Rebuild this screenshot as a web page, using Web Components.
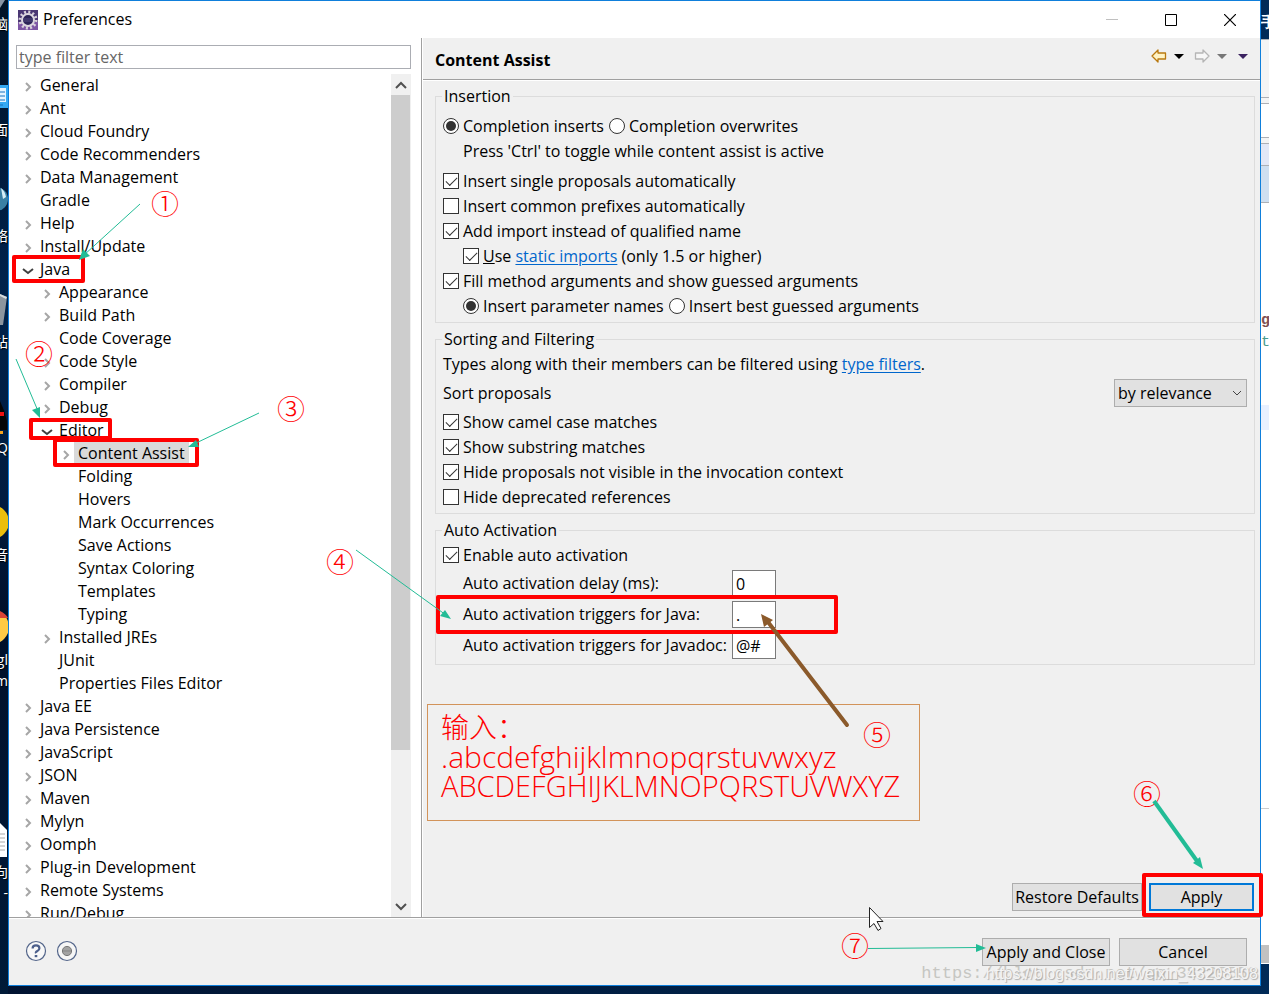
<!DOCTYPE html>
<html lang="en">
<head>
<meta charset="utf-8">
<title>Preferences</title>
<style>
  html, body { height: 100%; margin: 0; }
  body {
    --face: #f0f0f0; --line: #a0a0a0; --frame: #dcdcdc; --accent: #0078d7; --mark: #f00; --guide: #22bc96;
    font: 16px/23px "Open Sans", "Noto Sans CJK SC", sans-serif; color: #000; background: #021a3a; overflow: hidden;
  }
</style>
</head>
<body>
<desktop-scene>
  <desktop-edge slot="left"></desktop-edge>
  <pref-dialog heading="Preferences">
    <pref-tree slot="nav">
      <tree-row state="closed">General</tree-row>
      <tree-row state="closed">Ant</tree-row>
      <tree-row state="closed">Cloud Foundry</tree-row>
      <tree-row state="closed">Code Recommenders</tree-row>
      <tree-row state="closed">Data Management</tree-row>
      <tree-row>Gradle</tree-row>
      <tree-row state="closed">Help</tree-row>
      <tree-row state="closed">Install/Update</tree-row>
      <tree-row state="open">Java</tree-row>
      <tree-row level="2" state="closed">Appearance</tree-row>
      <tree-row level="2" state="closed">Build Path</tree-row>
      <tree-row level="2">Code Coverage</tree-row>
      <tree-row level="2" state="closed">Code Style</tree-row>
      <tree-row level="2" state="closed">Compiler</tree-row>
      <tree-row level="2" state="closed">Debug</tree-row>
      <tree-row level="2" state="open">Editor</tree-row>
      <tree-row level="3" state="closed" selected>Content Assist</tree-row>
      <tree-row level="3">Folding</tree-row>
      <tree-row level="3">Hovers</tree-row>
      <tree-row level="3">Mark Occurrences</tree-row>
      <tree-row level="3">Save Actions</tree-row>
      <tree-row level="3">Syntax Coloring</tree-row>
      <tree-row level="3">Templates</tree-row>
      <tree-row level="3">Typing</tree-row>
      <tree-row level="2" state="closed">Installed JREs</tree-row>
      <tree-row level="2">JUnit</tree-row>
      <tree-row level="2">Properties Files Editor</tree-row>
      <tree-row state="closed">Java EE</tree-row>
      <tree-row state="closed">Java Persistence</tree-row>
      <tree-row state="closed">JavaScript</tree-row>
      <tree-row state="closed">JSON</tree-row>
      <tree-row state="closed">Maven</tree-row>
      <tree-row state="closed">Mylyn</tree-row>
      <tree-row state="closed">Oomph</tree-row>
      <tree-row state="closed">Plug-in Development</tree-row>
      <tree-row state="closed">Remote Systems</tree-row>
      <tree-row state="closed">Run/Debug</tree-row>
    </pref-tree>
    <pref-page heading="Content Assist">
      <option-group legend="Insertion" roomy>
        <option-row>
          <choice-box kind="radio" checked>Completion inserts</choice-box>
          <choice-box kind="radio">Completion overwrites</choice-box>
        </option-row>
        <option-row indent last>Press 'Ctrl' to toggle while content assist is active</option-row>
        <option-row><choice-box checked>Insert single proposals automatically</choice-box></option-row>
        <option-row><choice-box>Insert common prefixes automatically</choice-box></option-row>
        <option-row><choice-box checked>Add import instead of qualified name</choice-box></option-row>
        <option-row indent><choice-box checked><u>U</u>se <text-link>static imports</text-link> (only 1.5 or higher)</choice-box></option-row>
        <option-row><choice-box checked>Fill method arguments and show guessed arguments</choice-box></option-row>
        <option-row indent>
          <choice-box kind="radio" checked>Insert parameter names</choice-box>
          <choice-box kind="radio">Insert best guessed arguments</choice-box>
        </option-row>
      </option-group>
      <option-group legend="Sorting and Filtering">
        <option-row><span>Types along with their members can be filtered using <text-link>type filters</text-link>.</span></option-row>
        <drop-field label="Sort proposals" value="by relevance"></drop-field>
        <option-row><choice-box checked>Show camel case matches</choice-box></option-row>
        <option-row><choice-box checked>Show substring matches</choice-box></option-row>
        <option-row><choice-box checked>Hide proposals not visible in the invocation context</choice-box></option-row>
        <option-row><choice-box>Hide deprecated references</choice-box></option-row>
      </option-group>
      <option-group legend="Auto Activation">
        <option-row><choice-box checked>Enable auto activation</choice-box></option-row>
        <trigger-fields></trigger-fields>
      </option-group>
      <push-button slot="actions" style="--w:130px">Restore Defaults</push-button>
      <push-button slot="actions" style="--w:105px" primary>Apply</push-button>
    </pref-page>
    <push-button slot="buttons" style="--w:128px">Apply and Close</push-button>
    <push-button slot="buttons" style="--w:128px">Cancel</push-button>
  </pref-dialog>
  <editor-edge slot="right"></editor-edge>
  <tutorial-notes slot="over"></tutorial-notes>
</desktop-scene>

<script>
const define = (name, html, setup) => customElements.define(name, class extends HTMLElement {
  constructor() {
    super();
    const t = document.createElement('template');
    t.innerHTML = typeof html === 'function' ? html(this) : html;
    this.attachShadow({ mode: 'open' }).append(t.content.cloneNode(true));
    if (setup) setup(this, this.shadowRoot);
  }
});

define('desktop-scene', `
<style>
  :host { display: grid; position: relative; grid-template-columns: 8px minmax(0, 1fr) 8px; height: 100vh; overflow: hidden;
    background: linear-gradient(90deg, #011331, #002147 60%, #002a57); }
  .mid { display: flex; min-width: 0; min-height: 0; padding-bottom: 8px; }
</style>
<slot name="left"></slot><div class="mid"><slot></slot></div><slot name="right"></slot><slot name="over"></slot>`);

/* Sliver of the desktop with its shortcut icons, to the left of the dialog */
define('desktop-edge', `
<style>
  :host { display: block; position: relative; overflow: hidden; color: #fff; background: linear-gradient(#021327, #00224b 28%, #001c40 50%, #00102b 62%, #001a38); }
  span { position: absolute; right: 0; font-size: 14px; line-height: 20px; white-space: nowrap; text-shadow: 1px 1px 1px #000; }
  svg { position: absolute; left: 0; top: 0; }
</style>
<svg width="8" height="994" aria-hidden="true">
  <path d="M0 0h5L0 8z" fill="#8895a5"/>
  <path d="M0 85h8v23H0z" fill="#35a9f3"/><path d="M0 88h6v14H0z" fill="#e5f4ff"/><path d="M0 92h5M0 96h5M0 100h5M0 105h3" stroke="#1673bf"/>
  <circle cx="-4" cy="199" r="12" fill="#3980a4"/><path d="M1 188q4 3 5 9l-3 2z" fill="#d6eef6"/>
  <path d="M0 294l7 3-4 28H0z" fill="#8c959e"/><path d="M0 294l7 3-1 2-6-3z" fill="#d8dde0"/>
  <path d="M0 401q5 10 7 20v9H0z" fill="#060606"/><path d="M0 412h4v4H0z" fill="#e11"/><path d="M0 431h3v3H0z" fill="#f6a31c"/>
  <circle cx="-8" cy="522" r="17" fill="#eabf0c"/>
  <circle cx="-8" cy="627" r="17" fill="#ffca45"/><path d="M0 611q6 3 8 7H0z" fill="#db4437"/>
  <path d="M0 823l7 7v27H0z" fill="#fff"/><path d="M0 834h5M0 838h5M0 842h5M0 846h5M0 850h5" stroke="#aaa"/>
</svg>
<span style="top:14px">脑</span><span style="top:120px">面</span><span style="top:226px">络</span><span style="top:332px">站</span>
<span style="top:438px">Q</span><span style="top:545px">音</span><span style="top:650px">gl</span><span style="top:671px">m</span><span style="top:862px">向</span><span style="top:883px">-</span>`);

/* Sliver of the editor window behind the dialog */
define('editor-edge', `
<style>
  :host { display: block; position: relative; overflow: hidden; }
  svg { position: absolute; left: 0; top: 0; }
  span { position: absolute; left: 0; font: bold 15px/20px "Liberation Mono", monospace; }
</style>
<svg width="8" height="994" aria-hidden="true" shape-rendering="crispEdges">
  <path fill="#fff" d="M0 39h8v925H0z"/><path fill="#f4f4f4" d="M0 39h8v64H0zM0 138h8v6H0z"/>
  <path fill="#e3e8f6" d="M0 144h8v21H0z"/><path fill="#cfdff0" d="M0 166h8v36H0z"/>
  <path fill="#e8f0ff" d="M0 405h8v25H0z"/><path fill="#c1c1c1" d="M0 945h8v18H0z"/>
  <path stroke="#adb0b5" d="M0 39.5h8M0 97.5h8M0 103.5h8M0 137.5h8M0 143.5h8M0 165.5h8M0 202.5h8"/><path stroke="#ccc" d="M0 808.5h8"/>
</svg>
<span style="top:14px;color:#fff">手</span><span style="top:311px;color:#805050">g</span><span style="top:333px;color:#4a9a8c;font-weight:400">t</span>`);

define('pref-dialog', h => `
<style>
  :host { display: flex; flex: 1; min-width: 0; flex-direction: column; border: 1px solid #0f7fdb; background: var(--face); }
  header { display: flex; align-items: center; height: 37px; padding: 0 1px 0 9px; background: #fff; }
  h1 { flex: 1; margin: 0 0 0 5px; font: inherit; }
  header button { display: grid; place-items: center; width: 59px; height: 37px; padding: 0; border: 0; background: none; }
  main { display: grid; grid-template-columns: 413px minmax(0, 1fr); flex: 1; min-height: 0; }
  footer { display: flex; align-items: center; gap: 9px; height: 66px; padding: 1px 13px 0 16px; border-top: 1px solid var(--line); box-shadow: inset 0 1px #fff; }
  footer .round { width: 22px; height: 22px; margin-bottom: 2px; padding: 0; border: 0; background: none; }
  .space { flex: 1; }
  svg { display: block; }
</style>
<header>
  <svg width="20" height="20" viewBox="0 0 20 20" aria-hidden="true">
    <rect width="20" height="20" fill="#4a3773"/><path d="M0 12h20v8H0z" fill="#7d55a4"/>
    <circle cx="10" cy="10" r="8" fill="none" stroke="#d9d2dc" stroke-width="3" stroke-dasharray="2 2.19"/>
    <circle cx="10" cy="10" r="6" fill="#2c2357" stroke="#dcd6df" stroke-width="2"/><path d="M5 9h10M5 11h10" stroke="#554c83"/>
  </svg>
  <h1>${h.getAttribute('heading')}</h1>
  <button aria-label="Minimize"><svg width="12" height="12"><path d="M0 5.5h12" stroke="#c0c0c0"/></svg></button>
  <button aria-label="Maximize"><svg width="12" height="12"><path d="M.5.5h11v11H.5z" fill="none" stroke="#000"/></svg></button>
  <button aria-label="Close"><svg width="12" height="12"><path d="M0 0l12 12M12 0L0 12" stroke="#000" stroke-width="1.2"/></svg></button>
</header>
<main><slot name="nav"></slot><slot></slot></main>
<footer>
  <button class="round" aria-label="Help"><svg width="22" height="22" viewBox="0 0 22 22"><circle cx="11" cy="11" r="9.5" fill="#f8f8f8" stroke="#53658a" stroke-width="1.2"/><path d="M7.6 8.4Q7.6 5.4 11 5.4T14.4 8.3Q14.4 10 12.4 11T11 13.3" fill="none" stroke="#4c5f8b" stroke-width="2.2"/><path d="M9.7 15h2.6v2.2H9.7z" fill="#4c5f8b"/></svg></button>
  <button class="round" aria-label="Record preferences"><svg width="22" height="22" viewBox="0 0 22 22"><circle cx="11" cy="11" r="9.5" fill="#f6f6f6" stroke="#53658a" stroke-width="1.2"/><circle cx="11" cy="11" r="4.6" fill="#a2a2a2" stroke="#777"/><path d="M7 11h8" stroke="#858585"/></svg></button>
  <span class="space"></span>
  <slot name="buttons"></slot>
</footer>`);

define('pref-tree', `
<style>
  :host { display: flex; flex-direction: column; min-height: 0; padding: 7px 10px 0 7px; background: #fff; border-right: 1px solid var(--line); }
  input { height: 24px; box-sizing: border-box; padding: 0 2px; border: 1px solid #abadb3; border-radius: 0; font: inherit; outline: 0; }
  input::placeholder { color: #666; opacity: 1; }
  .body { display: flex; flex: 1; min-height: 0; margin-top: 5px; }
  .list { flex: 1; overflow: hidden; }
  .bar { display: flex; flex-direction: column; width: 20px; background: #f0f0f0; }
  .bar button { display: grid; place-items: center; height: 21px; padding: 0; border: 0; background: none; }
  .track { flex: 1; } .thumb { width: 19px; height: calc(100% - 146px); background: #cdcdcd; }
  path { fill: none; stroke: #505050; stroke-width: 2; }
</style>
<input type="text" placeholder="type filter text" aria-label="Filter preferences">
<div class="body">
  <div class="list" role="tree"><slot></slot></div>
  <div class="bar">
    <button aria-label="Scroll up"><svg width="12" height="8"><path d="M1 7l5-5 5 5"/></svg></button>
    <div class="track"><div class="thumb"></div></div>
    <button aria-label="Scroll down"><svg width="12" height="8"><path d="M1 1l5 5 5-5"/></svg></button>
  </div>
</div>`);

define('tree-row', h => {
  const s = h.getAttribute('state');
  return `
<style>
  :host { display: flex; align-items: center; height: 23px; padding-left: calc(6px + 19px * (var(--level) - 1)); white-space: nowrap; }
  svg { width: 12px; height: 12px; margin-right: 2px; margin-top: 2px; }
  path { fill: none; stroke: #a6a6a6; stroke-width: 2; } .open { stroke: #404040; }
  span { padding: 0 4px; } :host([selected]) span { background: #d9d9d9; }
</style>
<svg aria-hidden="true">${s === 'closed' ? '<path d="M4 2l4 4-4 4"/>' : s === 'open' ? '<path class="open" d="M1 4l5 4 5-4"/>' : ''}</svg><span><slot></slot></span>`;
}, h => {
  h.style.setProperty('--level', h.getAttribute('level') || 1);
  h.setAttribute('role', 'treeitem');
});

define('pref-page', h => `
<style>
  :host { display: flex; flex-direction: column; min-width: 0; border-left: 1px solid #fff; }
  header { display: flex; align-items: center; height: 41px; padding: 0 12px; border-bottom: 1px solid var(--line); box-shadow: 0 1px #fff; }
  h2 { flex: 1; margin: 4px 0 0; font-size: 16px; }
  nav { display: flex; align-items: center; gap: 7px; margin-bottom: 5px; }
  nav button { padding: 0; border: 0; background: none; } svg { display: block; }
  .groups { display: flex; flex: 1; flex-direction: column; gap: 6px; padding: 6px 5px 0 12px; }
  .actions { display: flex; justify-content: flex-end; gap: 7px; padding: 0 6px 6px; }
</style>
<header><h2>${h.getAttribute('heading')}</h2>
  <nav>
    <button aria-label="Back"><svg width="16" height="14"><path d="M1 7l6-6v3h7.500v6H7v3z" fill="#fff3c4" stroke="#b9790f" stroke-width="1.300" stroke-linejoin="round"/></svg></button>
    <button aria-label="Back history"><svg width="10" height="6"><path d="M0 1h10L5 6z"/></svg></button>
    <button aria-label="Forward" style="margin-left:3px"><svg width="16" height="14"><path d="M15 7L9 1v3H1.500v6H9v3z" fill="#f7f7f7" stroke="#b5b5b5" stroke-width="1.300" stroke-linejoin="round"/></svg></button>
    <button aria-label="Forward history"><svg width="10" height="6"><path d="M0 1h10L5 6z" fill="#777"/></svg></button>
    <button aria-label="Menu" style="margin-left:4px"><svg width="10" height="6"><path d="M0 1h10L5 6z" fill="#3b2260"/></svg></button>
  </nav>
</header>
<div class="groups"><slot></slot></div>
<div class="actions"><slot name="actions"></slot></div>`);

define('option-group', h => `
<style>
  :host { display: block; }
  fieldset { min-width: 0; margin: 0; padding: 3px 7px; border: 1px solid var(--frame); }
  :host([roomy]) fieldset { padding-top: 8px; }
  legend { height: 20px; margin-left: -1px; padding: 0 2px; line-height: 20px; }
</style>
<fieldset><legend>${h.getAttribute('legend')}</legend><slot></slot></fieldset>`);

define('option-row', `
<style>
  :host { display: flex; align-items: center; gap: 5px; height: 25px; white-space: nowrap; }
  :host([indent]) { padding-left: 20px; } :host([last]) { margin-bottom: 5px; }
</style><slot></slot>`);

define('choice-box', h => `
<style>
  :host { display: block; }
  label { display: flex; align-items: center; gap: 4px; }
  input { appearance: none; display: grid; place-items: center; flex: none; width: 16px; height: 16px; margin: 0 0 1px; border: 1px solid #333; background: #fff; }
  input[type=radio] { border-radius: 50%; }
  input[type=radio]:checked::before { content: ""; width: 10px; height: 10px; border-radius: 50%; background: #333; }
  input[type=checkbox]:checked::before { content: ""; width: 11px; height: 6px; box-sizing: border-box; border: solid #333; border-width: 0 0 1px 1px; transform: translateY(-1px) rotate(-45deg); }
</style>
<label><input type="${h.getAttribute('kind') || 'checkbox'}"${h.hasAttribute('checked') ? ' checked' : ''}><span><slot></slot></span></label>`);

define('text-link', `<style>:host { display: inline; } a { color: #0066cc; text-decoration: underline; text-underline-offset: 2px; }</style><a href="#"><slot></slot></a>`);

define('drop-field', h => `
<style>
  :host { display: flex; align-items: center; justify-content: space-between; height: 28px; margin: 2px 0 3px; }
  .box { display: grid; align-items: center; width: 133px; }
  select, svg { grid-area: 1 / 1; }
  select { appearance: none; height: 28px; padding: 0 3px; border: 1px solid #adadad; border-radius: 0; background: #e1e1e1; color: #000; font: inherit; }
  svg { justify-self: end; margin: 2px 5px 0 0; pointer-events: none; }
</style>
<label for="s">${h.getAttribute('label')}</label>
<div class="box"><select id="s"><option>${h.getAttribute('value')}</option></select>
<svg width="10" height="6"><path d="M1 0l4 4 4-4" fill="none" stroke="#444"/></svg></div>`);

define('trigger-fields', `
<style>
  :host { display: grid; grid-template-columns: 269px 44px; gap: 4px 0; align-items: center; margin: 2px 0; padding-left: 20px; white-space: nowrap; }
  input { height: 27px; box-sizing: border-box; width: 44px; padding: 0 3px; border: 1px solid #7a7a7a; font: inherit; }
</style>
<label for="a">Auto activation delay (ms):</label><input id="a" value="0">
<label for="b">Auto activation triggers for Java:</label><input id="b" value=".">
<label for="c">Auto activation triggers for Javadoc:</label><input id="c" value="@#">`);

define('push-button', `
<style>
  :host { display: block; width: var(--w); }
  button { width: 100%; height: 28px; padding: 0; border: 1px solid #adadad; background: #e1e1e1; color: #000; font: inherit; white-space: nowrap; }
  :host([primary]) button { border: 2px solid var(--accent); }
</style><button><slot></slot></button>`);

/* Hand-placed marks over the window: frames, arrows, step numbers and the callout */
define('tutorial-notes', `
<style>
  :host { position: absolute; inset: 0; pointer-events: none; color: var(--mark); }
  svg, i, .note, .wm { position: absolute; }
  svg { overflow: visible; }
  .tl { left: 0; top: 0; } .br { right: 0; bottom: 0; }
  i { width: 30px; text-align: center; font: 300 28px/30px "Noto Sans CJK SC", sans-serif; }
  .note { left: 427px; top: 704px; box-sizing: border-box; width: 493px; height: 117px; padding: 8px 13px; border: 1px solid #d2935a; font: 300 28px/29px "Open Sans", "Noto Sans CJK SC", sans-serif; }
  .note p { margin: 0; height: 29px; white-space: nowrap; }
  .note .lower { font-size: 30px; } .note .upper { font-size: 29px; }
  rect { fill: none; stroke: var(--mark); stroke-width: 4; stroke-linejoin: round; }
  .thin { stroke: var(--guide); stroke-width: 1; fill: none; }
  .wm { right: 11px; bottom: 10px; line-height: 20px; white-space: nowrap; }
  .w1 { font-family: "Liberation Mono", monospace; font-size: 17px; color: #c6c6c2; }
  .w2 { font-family: "Liberation Sans", sans-serif; font-size: 16px; color: #f4f4f4; text-shadow: 1px 1px 1px #aaa; }
</style>
<svg class="tl" width="1000" height="840" viewBox="0 0 1000 840" aria-hidden="true">
  <rect x="14" y="257" width="69" height="24"/><rect x="31" y="420" width="79" height="18"/>
  <rect x="55" y="440" width="142" height="25"/><rect x="438" y="597" width="398" height="35"/>
  <path class="thin" d="M140 204L84 255M16 359l22 52M259 413l-65 31M356 550l90 65"/>
  <path fill="#22bc96" d="M79 260l4-11 7 7zM40 418l-8-8 8-3zM188 447l8-7 3 7zM451 619l-11-3 5-6z"/>
</svg>
<div class="note"><p>输入：</p><p class="lower">.abcdefghijklmnopqrstuvwxyz</p><p class="upper">ABCDEFGHIJKLMNOPQRSTUVWXYZ</p></div>
<svg class="tl" width="1000" height="840" viewBox="0 0 1000 840" aria-hidden="true">
  <path d="M847 725l-79-103" stroke="#8b5a2b" stroke-width="4" stroke-linecap="round"/><path d="M761 614l12 6-9 7z" fill="#8b5a2b"/>
</svg>
<i style="left:150px;top:188px">①</i><i style="left:24px;top:338px">②</i><i style="left:276px;top:393px">③</i><i style="left:325px;top:546px">④</i><i style="left:862px;top:719px">⑤</i>
<i style="right:107px;bottom:186px">⑥</i><i style="right:399px;bottom:34px">⑦</i>
<svg class="br" width="421" height="224" viewBox="848 770 421 224" aria-hidden="true">
  <rect x="1144" y="875" width="117" height="40"/>
  <path d="M1154 801l43 60" stroke="#22bc96" stroke-width="4"/><path d="M1203 869l-10-6 7-6z" fill="#22bc96"/>
  <path class="thin" d="M868 948.500L978 947.500"/><path d="M986 948l-10-4v8z" fill="#22bc96"/>
  <path d="M869.500 907.500v20l4.500-4 4 7 3-2-4-7h6z" fill="#fff" stroke="#222"/>
</svg>
<span class="wm w1">https://blog.csdn.net/qq_38225558</span><span class="wm w2">https://blog.csdn.net/weixin_43208108</span>`);
</script>
</body>
</html>
